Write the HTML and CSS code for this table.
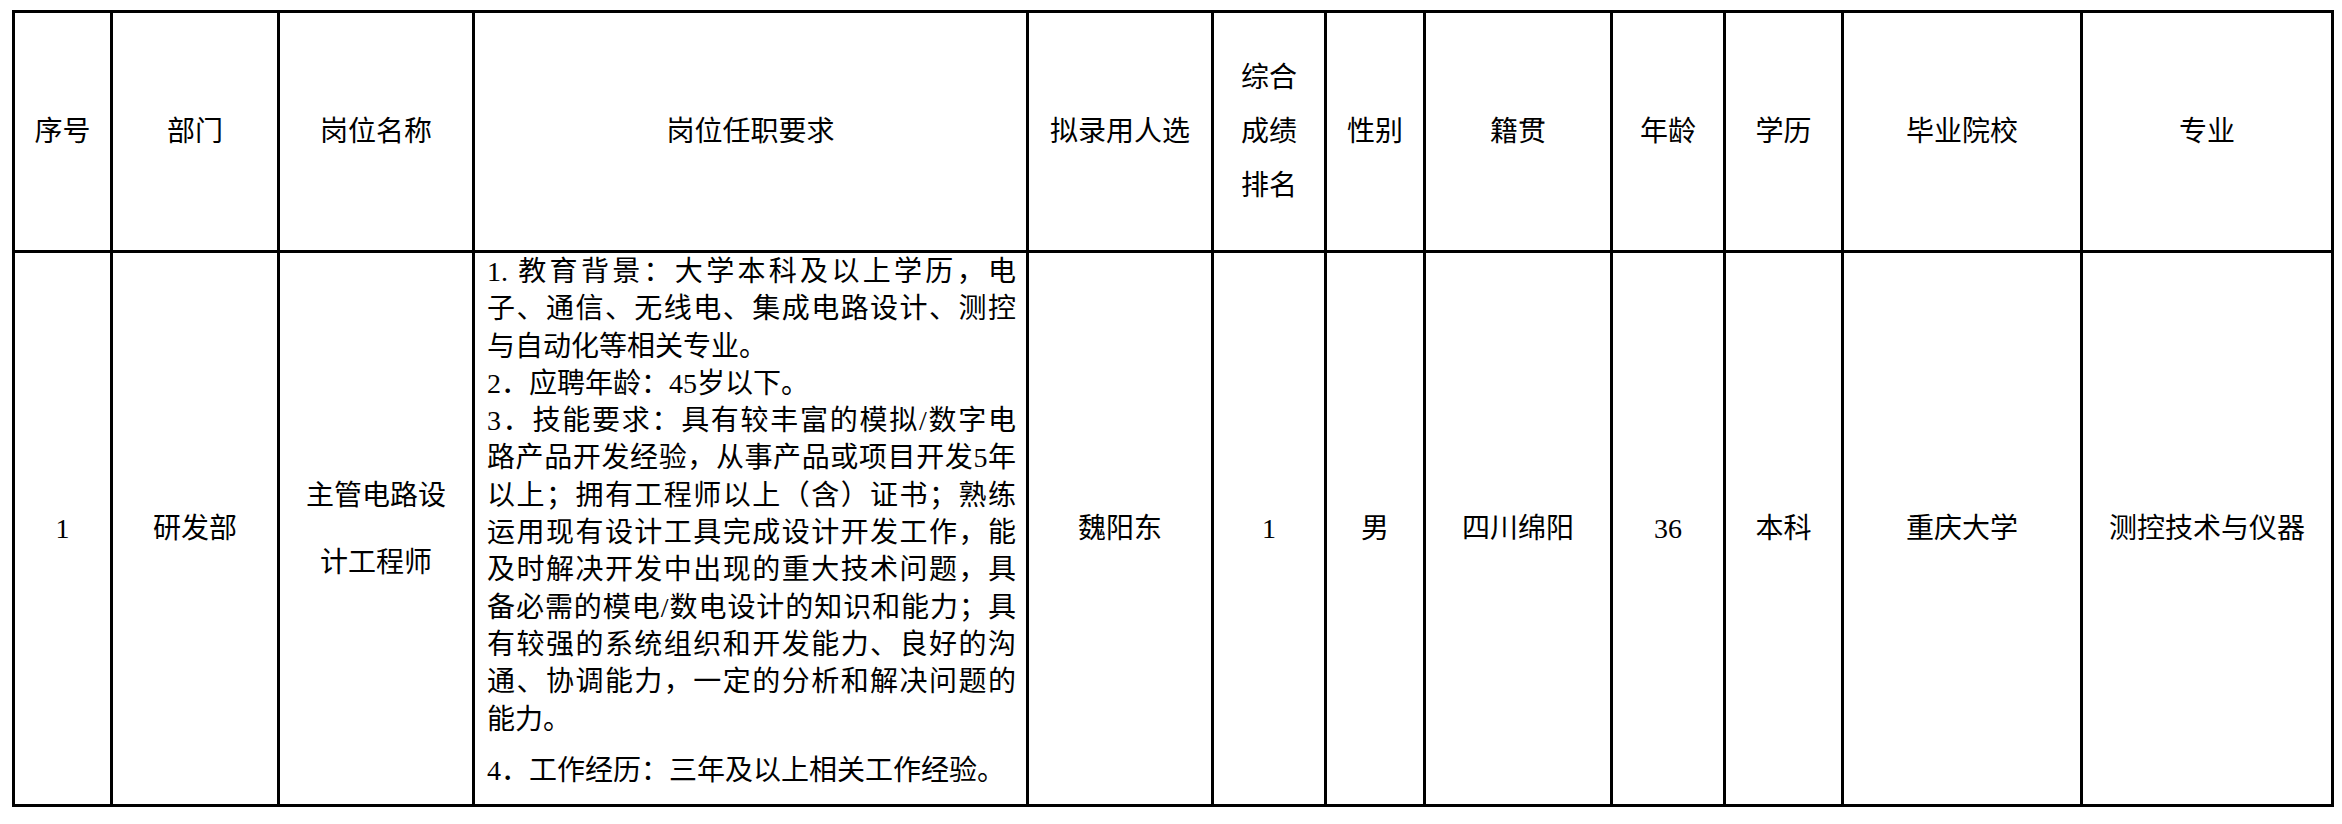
FILE: index.html
```html
<!DOCTYPE html>
<html lang="zh-CN">
<head>
<meta charset="utf-8">
<title>拟录用人选公示</title>
<link rel="stylesheet" href="styles.css">
</head>
<body>
<div class="sheet" role="table">
  <div class="cell head" role="columnheader">序号</div>
  <div class="cell head" role="columnheader">部门</div>
  <div class="cell head" role="columnheader">岗位名称</div>
  <div class="cell head" role="columnheader">岗位任职要求</div>
  <div class="cell head" role="columnheader">拟录用人选</div>
  <div class="cell head tall" role="columnheader">综合<br>成绩<br>排名</div>
  <div class="cell head" role="columnheader">性别</div>
  <div class="cell head" role="columnheader">籍贯</div>
  <div class="cell head" role="columnheader">年龄</div>
  <div class="cell head" role="columnheader">学历</div>
  <div class="cell head" role="columnheader">毕业院校</div>
  <div class="cell head" role="columnheader">专业</div>

  <div class="cell" role="cell">1</div>
  <div class="cell" role="cell">研发部</div>
  <div class="cell spaced" role="cell">主管电路设<br>计工程师</div>
  <div class="cell req" role="cell">
    <p class="para">
      <span class="ln j">1. 教育背景：大学本科及以上学历，电</span>
      <span class="ln j">子、通信、无线电、集成电路设计、测控</span>
      <span class="ln">与自动化等相关专业。</span>
    </p>
    <p class="para">
      <span class="ln">2．应聘年龄：45岁以下。</span>
    </p>
    <p class="para">
      <span class="ln j">3．技能要求：具有较丰富的模拟/数字电</span>
      <span class="ln j">路产品开发经验，从事产品或项目开发5年</span>
      <span class="ln j">以上；拥有工程师以上（含）证书；熟练</span>
      <span class="ln j">运用现有设计工具完成设计开发工作，能</span>
      <span class="ln j">及时解决开发中出现的重大技术问题，具</span>
      <span class="ln j">备必需的模电/数电设计的知识和能力；具</span>
      <span class="ln j">有较强的系统组织和开发能力、良好的沟</span>
      <span class="ln j">通、协调能力，一定的分析和解决问题的</span>
      <span class="ln">能力。</span>
    </p>
    <p class="para last">
      <span class="ln">4．工作经历：三年及以上相关工作经验。</span>
    </p>
  </div>
  <div class="cell" role="cell">魏阳东</div>
  <div class="cell" role="cell">1</div>
  <div class="cell" role="cell">男</div>
  <div class="cell" role="cell">四川绵阳</div>
  <div class="cell" role="cell">36</div>
  <div class="cell" role="cell">本科</div>
  <div class="cell" role="cell">重庆大学</div>
  <div class="cell" role="cell">测控技术与仪器</div>
</div>
</body>
</html>
```

FILE: styles.css
```css
html, body {
  margin: 0;
  padding: 0;
  background: #ffffff;
}

body {
  font-family: "Liberation Serif", "Noto Sans CJK SC", serif;
  font-size: 28px;
  color: #000000;
}

.sheet {
  display: grid;
  grid-template-columns: 95px 164px 192px 551px 182px 110px 96px 184px 110px 115px 236px 248px;
  grid-template-rows: 237px 551px;
  gap: 3px;
  padding: 3px;
  background: #000000;
  width: max-content;
  margin: 10px 0 0 12px;
}

.cell {
  background: #ffffff;
  display: flex;
  align-items: center;
  justify-content: center;
  text-align: center;
  line-height: 36px;
}

.head.tall {
  line-height: 54px;
}

.spaced {
  line-height: 67px;
}

.req {
  display: block;
  text-align: left;
  padding: 0 10px 0 12px;
  line-height: 37.3px;
}

.para {
  margin: 0;
}

.para.last {
  margin-top: 14px;
}

.ln {
  display: block;
}

.ln.j {
  text-align: justify;
  text-align-last: justify;
}
```
